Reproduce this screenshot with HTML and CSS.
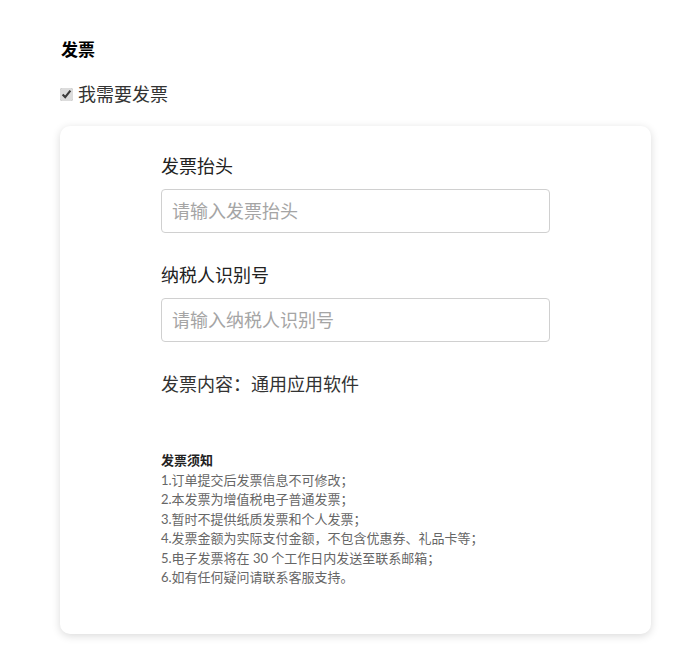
FILE: index.html
```html
<!DOCTYPE html>
<html lang="zh-CN">
<head>
    <meta charset="UTF-8">
    <meta name="viewport" content="width=device-width, initial-scale=1.0">
    <title>发票</title>
    <link rel="stylesheet" href="styles.css">
</head>
<body>
    <div class="page">
        <h3 class="title">发票</h3>
        <label class="need">
            <input type="checkbox" checked>
            <span>我需要发票</span>
        </label>

        <div class="card">
            <div class="field">
                <label for="head">发票抬头</label>
                <input type="text" id="head" placeholder="请输入发票抬头">
            </div>
            <div class="field">
                <label for="taxno">纳税人识别号</label>
                <input type="text" id="taxno" placeholder="请输入纳税人识别号">
            </div>
            <div class="content">发票内容：通用应用软件</div>

            <div class="notice">
                <h4>发票须知</h4>
                <p>1.订单提交后发票信息不可修改；</p>
                <p>2.本发票为增值税电子普通发票；</p>
                <p>3.暂时不提供纸质发票和个人发票；</p>
                <p>4.发票金额为实际支付金额，不包含优惠券、礼品卡等；</p>
                <p>5.电子发票将在 30 个工作日内发送至联系邮箱；</p>
                <p>6.如有任何疑问请联系客服支持。</p>
            </div>
        </div>
    </div>
</body>
</html>
```

FILE: styles.css
```css
* {
    box-sizing: border-box;
}
body {
    margin: 0;
    background: #fff;
    font-family: Lato, "Noto Sans CJK SC", sans-serif;
    color: #222;
}
.page {
    padding: 38px 40px 40px 60px;
}
.title {
    margin: 0 0 0 1px;
    font-size: 17px;
    line-height: 24px;
    font-weight: bold;
    color: #000;
}
.need {
    display: flex;
    align-items: center;
    margin-top: 20px;
    font-size: 18px;
    line-height: 24px;
    color: #333;
}
.need input {
    width: 13px;
    height: 13px;
    margin: 0 5px 0 0;
    accent-color: #dcdcdc;
}
.card {
    margin-top: 20px;
    background: #fff;
    border-radius: 10px;
    box-shadow: 0 2px 8px rgba(0, 0, 0, 0.15);
    padding: 28px 40px 46px 101px;
}
.field {
    margin-bottom: 30px;
}
.field label {
    display: block;
    font-size: 18px;
    line-height: 24px;
    color: #222;
    margin-bottom: 11px;
}
.field input {
    display: block;
    width: 389px;
    height: 44px;
    padding: 0 10px;
    border: 1px solid #d0d0d0;
    border-radius: 4px;
    font-family: inherit;
    font-size: 18px;
    color: #333;
    outline: none;
}
.field input::placeholder {
    color: #a5a5a5;
}
.content {
    font-size: 18px;
    line-height: 24px;
    color: #333;
}
.notice {
    margin-top: 55px;
    font-size: 13px;
    line-height: 19.5px;
    color: #666;
}
.notice h4 {
    margin: 0;
    font-size: 13px;
    font-weight: bold;
    color: #222;
}
.notice p {
    margin: 0;
}
```
